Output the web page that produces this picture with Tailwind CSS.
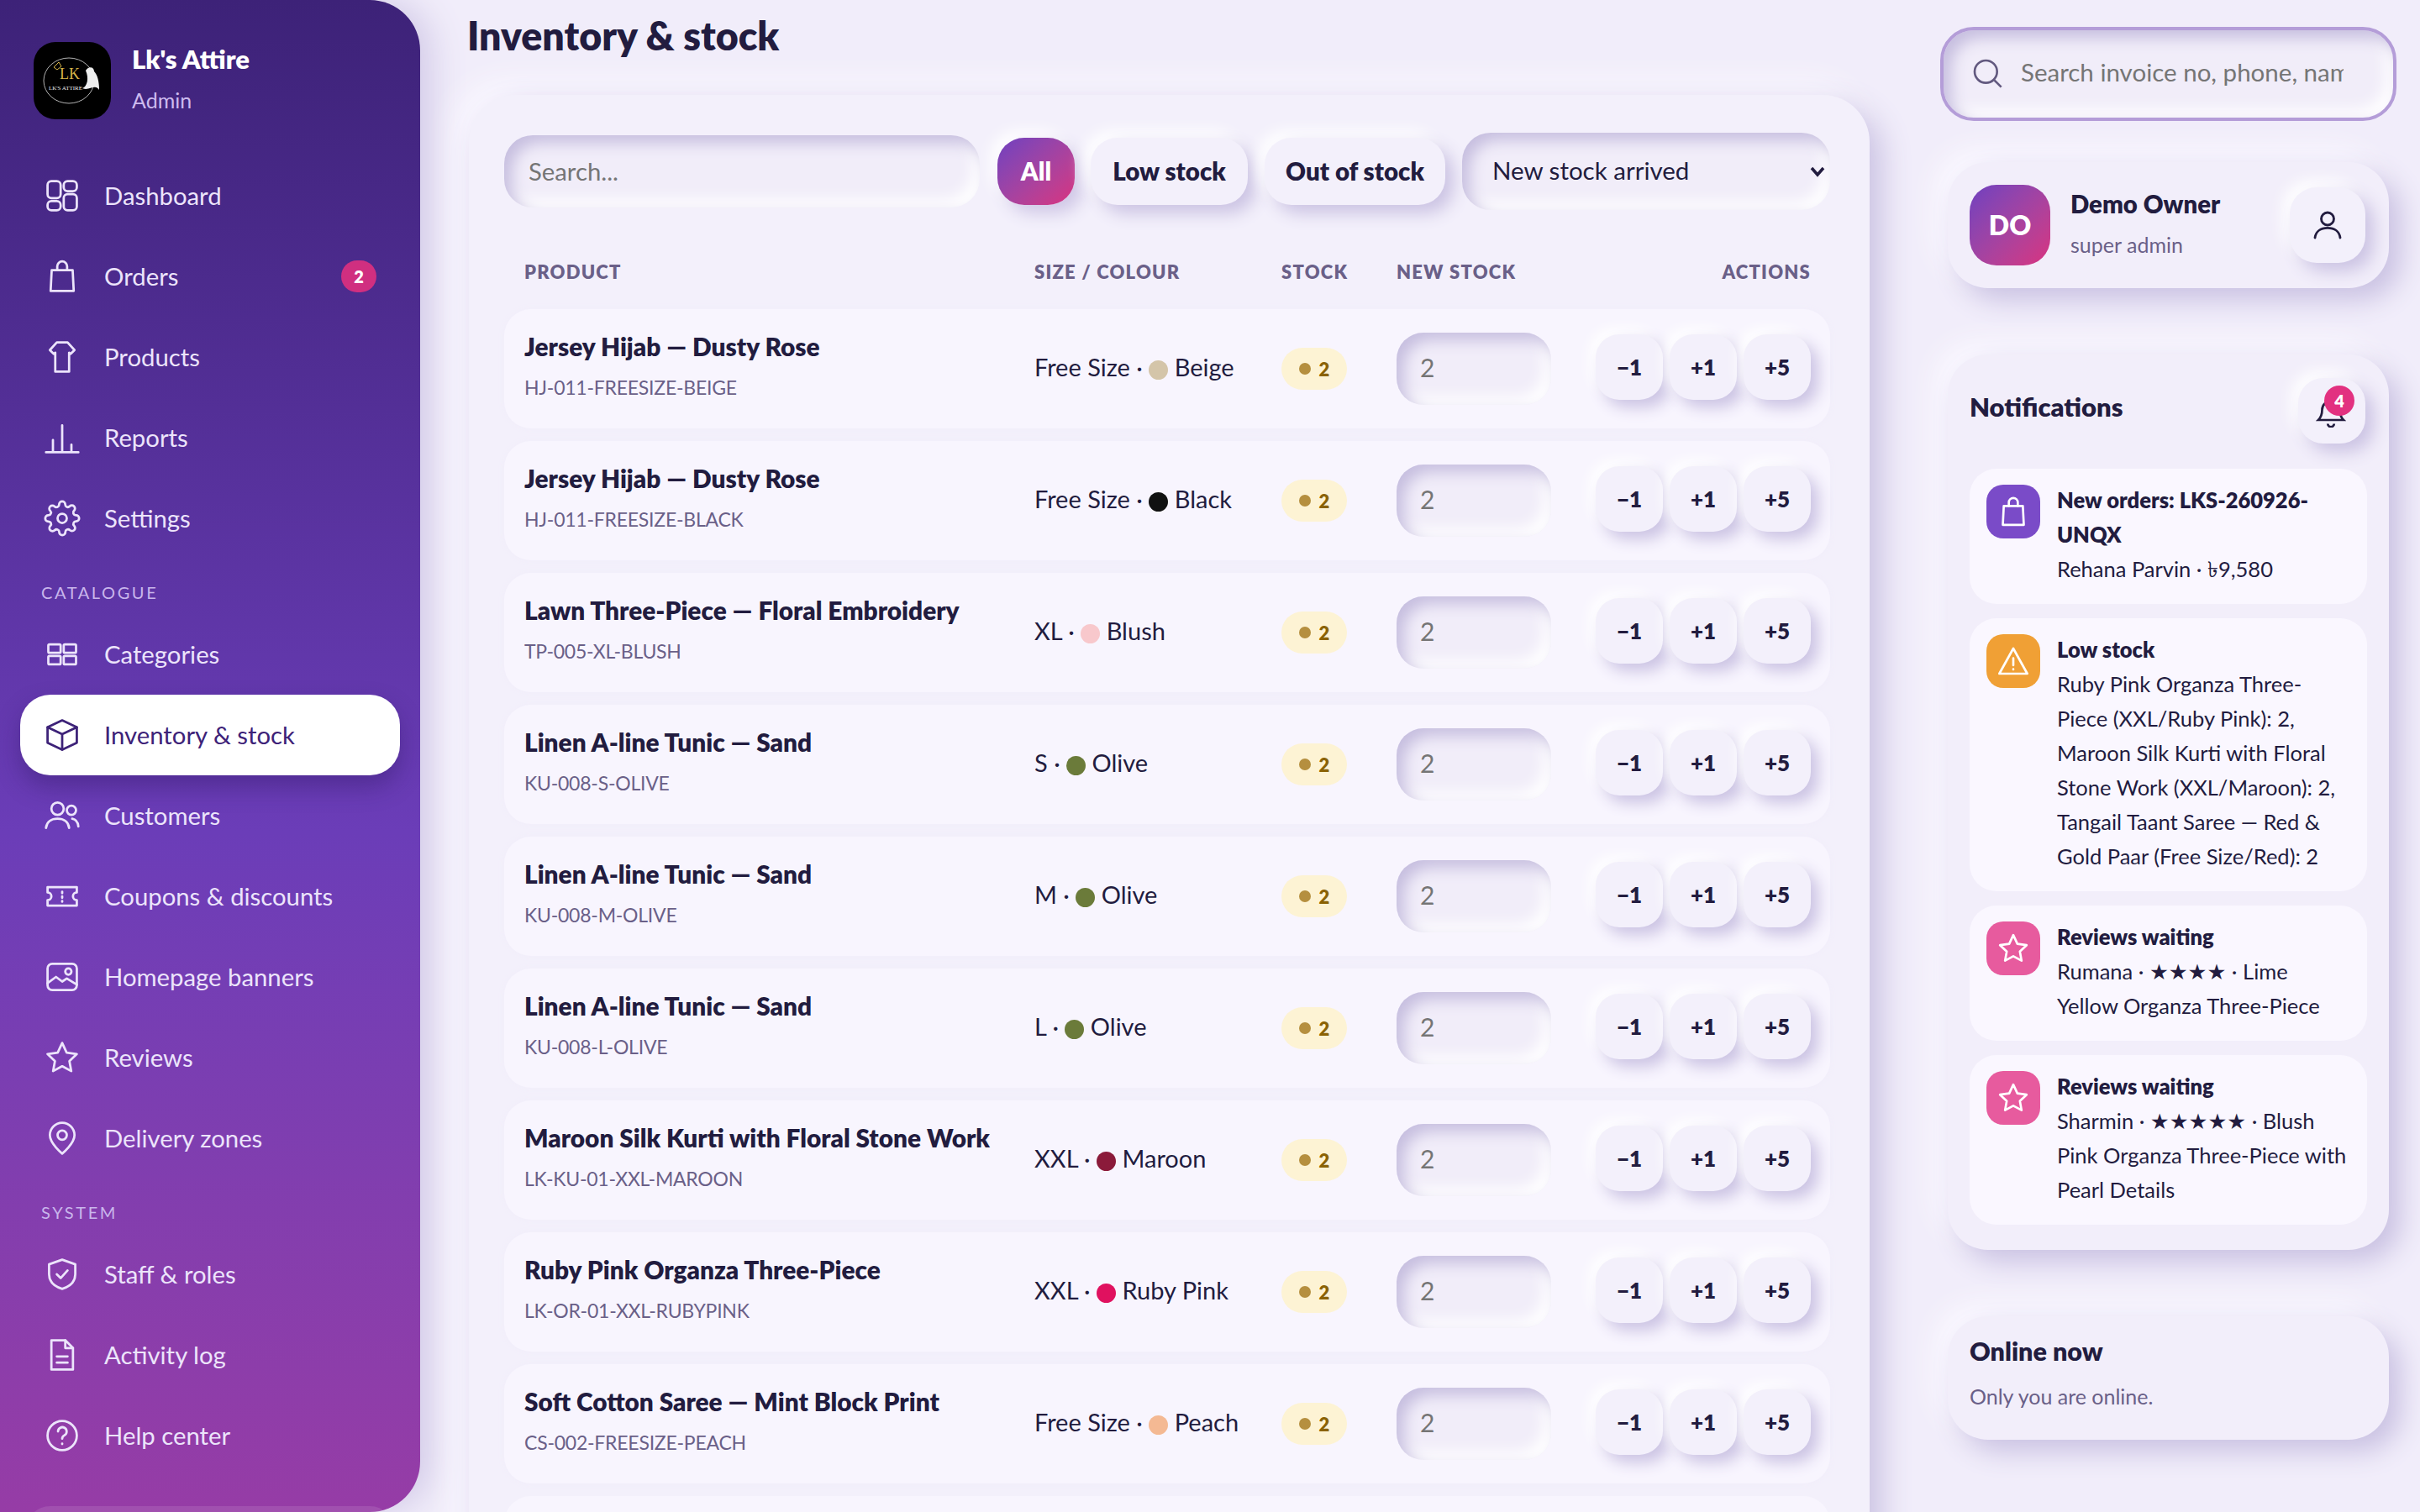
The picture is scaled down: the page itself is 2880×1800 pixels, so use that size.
<!DOCTYPE html>
<html lang="en">
<head>
  <meta charset="UTF-8" />
  <title>Inventory & stock</title>
  <script src="https://cdn.jsdelivr.net/npm/@tailwindcss/browser@4"></script>
</head>
<body class="bg-[#f1edfa] text-[#221c3f] font-['Lato','Noto_Sans','DejaVu_Sans',sans-serif]">
  <div class="flex w-[2880px] h-[1800px] overflow-hidden">

    <!-- Sidebar -->
    <aside class="w-[500px] h-[1800px] shrink-0 overflow-hidden rounded-r-[60px] bg-gradient-to-b from-[#3d2278] via-[#6b3db8] via-55% to-[#963ca6] shadow-[14px_0_40px_#d3cbe8]">
      <div class="flex items-center gap-[25px] mt-[50px] ml-[40px] mb-[43px]">
        <svg class="w-[92px] h-[92px]" viewBox="0 0 92 92">
          <rect width="92" height="92" rx="26" fill="#000" />
          <ellipse cx="42" cy="46" rx="30" ry="27" fill="none" stroke="#ddd" stroke-width="0.8" />
          <text x="31" y="44" font-size="18" fill="#d9b64a" font-family="Liberation Serif">LK</text>
          <text x="18" y="57" font-size="7" fill="#eee" font-family="Liberation Serif">LK'S ATTIRE</text>
          <path d="M62 34c4-6 10-4 10 1 4 4 6 12 6 22-5-8-12 2-20-2 6-2 8-12 4-21z" fill="#eee" />
          <path d="M24 30l6-6 3 5-5 4z" fill="none" stroke="#d9b64a" />
        </svg>
        <div class="pb-[6px]">
          <div class="text-[31px] leading-[42px] font-extrabold text-white -mt-[2px]">Lk's Attire</div>
          <div class="text-[25px] leading-[34px] mt-[11px] text-[#cdbbef]">Admin</div>
        </div>
      </div>
      <nav id="nav" class="px-[24px]"></nav>
      <div class="mx-[30px] mt-[36px] h-[60px] rounded-[30px] bg-white/10"></div>
    </aside>

    <!-- Main -->
    <main class="w-[1667px] ml-[58px] shrink-0">
      <h1 class="mt-[12px] mb-[41px] -ml-[2px] leading-[60px] text-[46.500px] font-extrabold">Inventory &amp; stock</h1>
      <section class="pt-[45px] pl-[42px] pr-[47px] h-[1800px] rounded-[56px] bg-[#f3f0fb] shadow-[14px_14px_36px_#c9c1e2,-14px_-14px_36px_#fbf9ff]">
        <div class="flex items-center gap-[20px]">
          <input placeholder="Search..." class="w-[566px] h-[86px] px-[29px] pb-[2px] rounded-[34px] bg-[#f1edf9] text-[29.300px] outline-none placeholder:text-[#757575] shadow-[inset_9px_9px_18px_#c6bedf,inset_-9px_-9px_18px_#fff]" />
          <button class="w-[92px] h-[80px] ml-[1px] -mr-[1px] rounded-[32px] text-[29.500px] font-extrabold text-white bg-gradient-to-br from-[#6f3fc0] to-[#d9307f] shadow-[10px_10px_20px_#cfc7e6,-8px_-8px_18px_#fff]">All</button>
          <button class="w-[187px] h-[80px] rounded-[32px] text-[29.500px] font-extrabold bg-[#f3f0fb] shadow-[10px_10px_20px_#cbc3e3,-8px_-8px_18px_#fff]">Low stock</button>
          <button class="w-[215px] h-[80px] rounded-[32px] text-[29.500px] font-extrabold bg-[#f3f0fb] shadow-[10px_10px_20px_#cbc3e3,-8px_-8px_18px_#fff]">Out of stock</button>
          <div class="relative">
            <select class="block appearance-none w-[438px] h-[92px] pl-[36px] pb-[2px] rounded-[34px] bg-[#f1edf9] text-[29.500px] outline-none shadow-[inset_9px_9px_18px_#c6bedf,inset_-9px_-9px_18px_#fff]">
              <option>New stock arrived</option>
            </select>
            <svg class="absolute right-[6px] top-[37px] w-[18px] h-[18px] pointer-events-none" viewBox="0 0 18 18" fill="none" stroke="#221c3f" stroke-width="3.500"><path d="M2 5l7 8 7-8" /></svg>
          </div>
        </div>

        <div class="grid grid-cols-[607px_294px_138px_1fr] items-center px-[24px] mt-[50px] mb-[22px] h-[46px] text-[22px] font-extrabold tracking-[0.055em] uppercase text-[#6a6088]">
          <div>Product</div>
          <div>Size / colour</div>
          <div>Stock</div>
          <div class="flex justify-between -ml-[1px]"><span>New stock</span><span class="-mr-[1px]">Actions</span></div>
        </div>

        <div id="rows"></div>
        <div class="h-[142px] rounded-[32px] bg-[#f8f5fe]"></div>
      </section>
    </main>

    <!-- Right column -->
    <div class="w-[543px] ml-[84px] shrink-0">
      <div class="relative mt-[32px] h-[112px] rounded-[40px] border-[4px] border-[#b49dd8] bg-[#f1edf9] shadow-[inset_9px_9px_18px_#c6bedf,inset_-9px_-9px_18px_#fff]">
        <svg class="absolute left-[32px] top-[31px] w-[40px] h-[40px] text-[#62597f]" viewBox="0 0 24 24" fill="none" stroke="currentColor" stroke-width="1.6"><circle cx="11" cy="11" r="8" /><path d="M17 17l5 5" /></svg>
        <input placeholder="Search invoice no, phone, name, email" class="w-full h-full pl-[92px] pr-[59px] pb-[6px] bg-transparent text-[29.500px] outline-none placeholder:text-[#757575]" />
      </div>

      <div class="flex items-center mx-[9px] mt-[49px] h-[150px] pl-[26px] pr-[28px] rounded-[48px] bg-[#f2eefa] shadow-[14px_14px_32px_#c9c1e2,-14px_-14px_32px_#fbf9ff]">
        <div class="flex items-center justify-center w-[96px] h-[96px] rounded-[32px] text-[32px] font-extrabold text-white bg-gradient-to-br from-[#6f3fc0] to-[#d9307f]">DO</div>
        <div class="ml-[24px] flex-1 pb-[6px]">
          <div class="text-[29.300px] leading-[40px] font-extrabold">Demo Owner</div>
          <div class="text-[25px] leading-[34px] mt-[11px] text-[#6a6088]">super admin</div>
        </div>
        <button class="flex items-center justify-center w-[90px] h-[90px] rounded-[32px] bg-[#f3f0fb] shadow-[10px_10px_20px_#cbc3e3,-8px_-8px_18px_#fff]">
          <svg class="w-[40px] h-[40px]" viewBox="0 0 24 24" fill="none" stroke="currentColor" stroke-width="1.7" stroke-linecap="round"><circle cx="12" cy="7.500" r="4.500" /><path d="M3 21c.6-4.500 4.200-7 9-7s8.400 2.500 9 7" /></svg>
        </button>
      </div>

      <div class="mx-[9px] mt-[79px] h-[1066px] px-[26px] pt-[28px] rounded-[48px] bg-[#f2eefa] shadow-[14px_14px_32px_#c9c1e2,-14px_-14px_32px_#fbf9ff]">
        <div class="flex items-center justify-between h-[78px] pr-[2px]">
          <div class="text-[31px] font-extrabold pb-[10px]">Notifications</div>
          <button class="relative flex items-center justify-center w-[80px] h-[78px] rounded-[30px] bg-[#f3f0fb] shadow-[10px_10px_20px_#cbc3e3,-8px_-8px_18px_#fff]">
            <svg class="w-[36px] h-[36px] mt-[4px] -ml-[2px]" viewBox="0 0 24 24" fill="none" stroke="currentColor" stroke-width="1.8"><path d="M2 18h20c-2-2-3-4-3-8a7 7 0 0 0-14 0c0 4-1 6-3 8z" /><path d="M9.500 21a2.500 2.500 0 0 0 5 0" /></svg>
            <span class="absolute left-[31px] top-[9px] flex items-center justify-center w-[36px] h-[36px] rounded-full bg-[#e23180] text-[20px] font-extrabold text-white">4</span>
          </button>
        </div>
        <div id="notes" class="mt-[30px] space-y-[17px]"></div>
      </div>

      <div class="mx-[9px] mt-[79px] h-[147px] px-[26px] pt-[21px] rounded-[48px] bg-[#f2eefa] shadow-[14px_14px_32px_#c9c1e2,-14px_-14px_32px_#fbf9ff]">
        <div class="text-[30.500px] leading-[40px] font-extrabold">Online now</div>
        <div class="text-[25px] leading-[34px] mt-[17px] text-[#6a6088]">Only you are online.</div>
      </div>
    </div>
  </div>

  <script>
    const icons = {
      dash: '<rect x="2.500" y="2.500" width="8.500" height="11" rx="2.500"/><rect x="13" y="2.500" width="8.500" height="6.500" rx="2.500"/><rect x="2.500" y="15.500" width="8.500" height="6" rx="2.500"/><rect x="13" y="11" width="8.500" height="10.500" rx="2.500"/>',
      bag: '<path d="M5.200 8h13.600l.7 13.500H4.500z"/><path d="M8.800 8V5.500a3.200 3.200 0 0 1 6.400 0V8"/>',
      shirt: '<path d="M8.500 2.500h7l4.500 5-2.500 2.500-1-.8v12.300H7.500V9.200l-1 .8L4 7.500z"/>',
      chart: '<path d="M1.500 21.500h21M6 21.500v-8M12 21.500V4M18 21.500v-5"/>',
      gear: '<circle cx="12" cy="12" r="3"/><path d="M19.400 15a1.650 1.650 0 0 0 .33 1.820l.06.06a2 2 0 0 1 0 2.830 2 2 0 0 1-2.830 0l-.06-.06a1.650 1.650 0 0 0-1.820-.33 1.650 1.650 0 0 0-1 1.510V21a2 2 0 0 1-2 2 2 2 0 0 1-2-2v-.09A1.650 1.650 0 0 0 9 19.400a1.650 1.650 0 0 0-1.820.33l-.06.06a2 2 0 0 1-2.830 0 2 2 0 0 1 0-2.830l.06-.06a1.650 1.650 0 0 0 .33-1.820 1.650 1.650 0 0 0-1.510-1H3a2 2 0 0 1-2-2 2 2 0 0 1 2-2h.09A1.650 1.650 0 0 0 4.600 9a1.650 1.650 0 0 0-.33-1.820l-.06-.06a2 2 0 0 1 0-2.830 2 2 0 0 1 2.830 0l.06.06a1.650 1.650 0 0 0 1.820.33H9a1.650 1.650 0 0 0 1-1.510V3a2 2 0 0 1 2-2 2 2 0 0 1 2 2v.09a1.650 1.650 0 0 0 1 1.510 1.650 1.650 0 0 0 1.820-.33l.06-.06a2 2 0 0 1 2.830 0 2 2 0 0 1 0 2.830l-.06.06a1.650 1.650 0 0 0-.33 1.820V9a1.650 1.650 0 0 0 1.510 1H21a2 2 0 0 1 2 2 2 2 0 0 1-2 2h-.09a1.650 1.650 0 0 0-1.510 1z"/>',
      grid: '<rect x="3" y="5.500" width="8" height="5.500" rx=".8"/><rect x="13" y="5.500" width="8" height="5.500" rx=".8"/><rect x="3" y="13" width="8" height="5.500" rx=".8"/><rect x="13" y="13" width="8" height="5.500" rx=".8"/>',
      box: '<path d="M12 2.500 2.500 7v10l9.500 4.500 9.500-4.500V7z"/><path d="M2.500 7l9.500 4.500L21.500 7M12 11.500v10"/>',
      users: '<circle cx="9" cy="7.500" r="4"/><path d="M1.500 20c.4-4 3.600-6 7.500-6s7.100 2 7.500 6"/><circle cx="18" cy="8.500" r="3"/><path d="M18.500 14c2.300.4 3.700 2.200 4 5"/>',
      ticket: '<path d="M2.500 6h19v3.500a2.500 2.500 0 0 0 0 5V18h-19v-3.500a2.500 2.500 0 0 0 0-5z"/><path d="M12 9v1M12 12v1M12 15v.5"/>',
      image: '<rect x="2.500" y="3.500" width="19" height="17" rx="3"/><path d="M2.500 16l5.500-4 4 3 3-2 6.500 4"/><circle cx="16" cy="8.500" r="2"/>',
      star: '<path d="M12 2.500l2.900 6.300 6.600.9-4.800 4.600 1.200 6.500L12 17.600l-5.900 3.200 1.200-6.500-4.800-4.600 6.600-.9z"/>',
      pin: '<path d="M12 22s8-6.500 8-12a8 8 0 1 0-16 0c0 5.500 8 12 8 12z"/><circle cx="12" cy="10" r="3"/>',
      shield: '<path d="M12 2.500l8.500 3v6.500c0 5-3.800 8-8.500 9.500-4.700-1.500-8.500-4.500-8.500-9.500V5.500z"/><path d="M8.500 12l2.500 2.500 4.500-5"/>',
      doc: '<path d="M5 2.500h9l5 5v14H5z"/><path d="M14 2.500v5h5M8.500 13h7M8.500 17h7"/>',
      help: '<circle cx="12" cy="12" r="9.500"/><path d="M9.300 9.300a2.800 2.800 0 1 1 4.200 2.500c-1 .6-1.500 1.200-1.500 2.200M12 17.200v.3"/>',
      warn: '<path d="M12 3 2 21h20z"/><path d="M12 10v5M12 17.800v.2"/>'
    };
    const svg = (name, cls, sw) => `<svg class="${cls}" viewBox="0 0 24 24" fill="none" stroke="currentColor" stroke-width="${sw}" stroke-linejoin="round" stroke-linecap="round">${icons[name]}</svg>`;

    const nav = [
      ['dash', 'Dashboard'], ['bag', 'Orders', '2'], ['shirt', 'Products'], ['chart', 'Reports'], ['gear', 'Settings'],
      ['CATALOGUE'],
      ['grid', 'Categories'], ['box', 'Inventory & stock', null, true], ['users', 'Customers'], ['ticket', 'Coupons & discounts'], ['image', 'Homepage banners'], ['star', 'Reviews'], ['pin', 'Delivery zones'],
      ['SYSTEM'],
      ['shield', 'Staff & roles'], ['doc', 'Activity log'], ['help', 'Help center']
    ];
    document.getElementById('nav').innerHTML = nav.map(([icon, label, badge, active]) => {
      if (!label) return `<div class="h-[66px] flex items-center pl-[25px] pt-[14px] text-[20px] tracking-[0.13em] text-[#c9b6ec]">${icon}</div>`;
      return `<a class="flex items-center h-[96px] pl-[28px] pr-[28px] gap-[28px] rounded-[36px] text-[29.300px] ${active ? 'bg-white text-[#3d2278] shadow-[0_14px_28px_rgba(40,20,90,0.35)]' : 'text-[#ece4fb]'}">
        ${svg(icon, 'w-[44px] h-[44px] shrink-0', 1.5)}
        <span class="flex-1">${label.replace('&', '&amp;')}</span>
        ${badge ? `<span class="flex items-center justify-center w-[42px] h-[38px] rounded-full bg-[#d02f80] text-[20px] font-extrabold text-white">${badge}</span>` : ''}
      </a>`;
    }).join('');

    const rows = [
      ['Jersey Hijab — Dusty Rose', 'HJ-011-FREESIZE-BEIGE', 'Free Size', '#d4c5a9', 'Beige'],
      ['Jersey Hijab — Dusty Rose', 'HJ-011-FREESIZE-BLACK', 'Free Size', '#111111', 'Black'],
      ['Lawn Three-Piece — Floral Embroidery', 'TP-005-XL-BLUSH', 'XL', '#f8c8cc', 'Blush'],
      ['Linen A-line Tunic — Sand', 'KU-008-S-OLIVE', 'S', '#6b7b3a', 'Olive'],
      ['Linen A-line Tunic — Sand', 'KU-008-M-OLIVE', 'M', '#6b7b3a', 'Olive'],
      ['Linen A-line Tunic — Sand', 'KU-008-L-OLIVE', 'L', '#6b7b3a', 'Olive'],
      ['Maroon Silk Kurti with Floral Stone Work', 'LK-KU-01-XXL-MAROON', 'XXL', '#8b1a3a', 'Maroon'],
      ['Ruby Pink Organza Three-Piece', 'LK-OR-01-XXL-RUBYPINK', 'XXL', '#e0115f', 'Ruby Pink'],
      ['Soft Cotton Saree — Mint Block Print', 'CS-002-FREESIZE-PEACH', 'Free Size', '#f4b993', 'Peach']
    ];
    document.getElementById('rows').innerHTML = rows.map(([name, sku, size, colour, colourName]) => `
      <div class="grid grid-cols-[607px_294px_138px_1fr] items-center h-[142px] mb-[15px] px-[24px] rounded-[32px] bg-[#f8f5fe] shadow-[0_0_8px_#f1edfa]">
        <div class="pb-[8px]">
          <div class="text-[29.800px] leading-[40px] font-extrabold">${name}</div>
          <div class="text-[23px] tracking-[-0.01em] leading-[32px] mt-[12px] text-[#6a6088]">${sku}</div>
        </div>
        <div class="text-[29px] pb-[5px]">${size} · <span class="inline-block align-middle w-[23px] h-[23px] rounded-full" style="background:${colour}"></span> ${colourName}</div>
        <div><span class="inline-flex items-center justify-center gap-[10px] w-[78px] h-[50px] rounded-[25px] bg-[#fdf3d4] text-[22px] font-extrabold text-[#8a6205]"><i class="w-[14px] h-[14px] rounded-full bg-[#b58f3f]"></i>2</span></div>
        <div class="flex items-center">
          <input placeholder="2" class="w-[184px] h-[86px] -ml-[1px] px-[28px] pb-[4px] rounded-[32px] bg-[#f1edf9] text-[30px] outline-none placeholder:text-[#757575] shadow-[inset_9px_9px_18px_#c6bedf,inset_-9px_-9px_18px_#fff]" />
          <div class="flex gap-[8px] ml-auto -mr-[1px] -mt-[4px]">
            <button class="w-[80px] h-[78px] rounded-[28px] text-[26px] font-extrabold bg-[#f3f0fb] shadow-[9px_9px_18px_#cbc3e3,-7px_-7px_16px_#fff]">−1</button>
            <button class="w-[80px] h-[78px] rounded-[28px] text-[26px] font-extrabold bg-[#f3f0fb] shadow-[9px_9px_18px_#cbc3e3,-7px_-7px_16px_#fff]">+1</button>
            <button class="w-[80px] h-[78px] rounded-[28px] text-[26px] font-extrabold bg-[#f3f0fb] shadow-[9px_9px_18px_#cbc3e3,-7px_-7px_16px_#fff]">+5</button>
          </div>
        </div>
      </div>`).join('');

    const notes = [
      ['bag', 'bg-[#7a4bc8]', 'New orders: LKS-260926-UNQX', 'Rehana Parvin · ৳9,580'],
      ['warn', 'bg-[#f0a035]', 'Low stock', 'Ruby Pink Organza Three-Piece (XXL/Ruby Pink): 2, Maroon Silk Kurti with Floral Stone Work (XXL/Maroon): 2, Tangail Taant Saree — Red &amp; Gold Paar (Free Size/Red): 2'],
      ['star', 'bg-[#e75b9e]', 'Reviews waiting', 'Rumana · ★★★★ · Lime Yellow Organza Three-Piece'],
      ['star', 'bg-[#e75b9e]', 'Reviews waiting', 'Sharmin · ★★★★★ · Blush Pink Organza Three-Piece with Pearl Details']
    ];
    document.getElementById('notes').innerHTML = notes.map(([icon, bg, title, text]) => `
      <div class="flex gap-[20px] pl-[20px] pr-[18px] pt-[17px] pb-[21px] rounded-[32px] bg-[#faf7ff]">
        <div class="flex items-center justify-center shrink-0 w-[64px] h-[64px] mt-[2px] rounded-[20px] text-white ${bg}">${svg(icon, 'w-[40px] h-[40px]', 1.6)}</div>
        <div class="text-[25.500px] leading-[41px]">
          <div class="font-extrabold">${title}</div>
          <div>${text}</div>
        </div>
      </div>`).join('');
  </script>
</body>
</html>
